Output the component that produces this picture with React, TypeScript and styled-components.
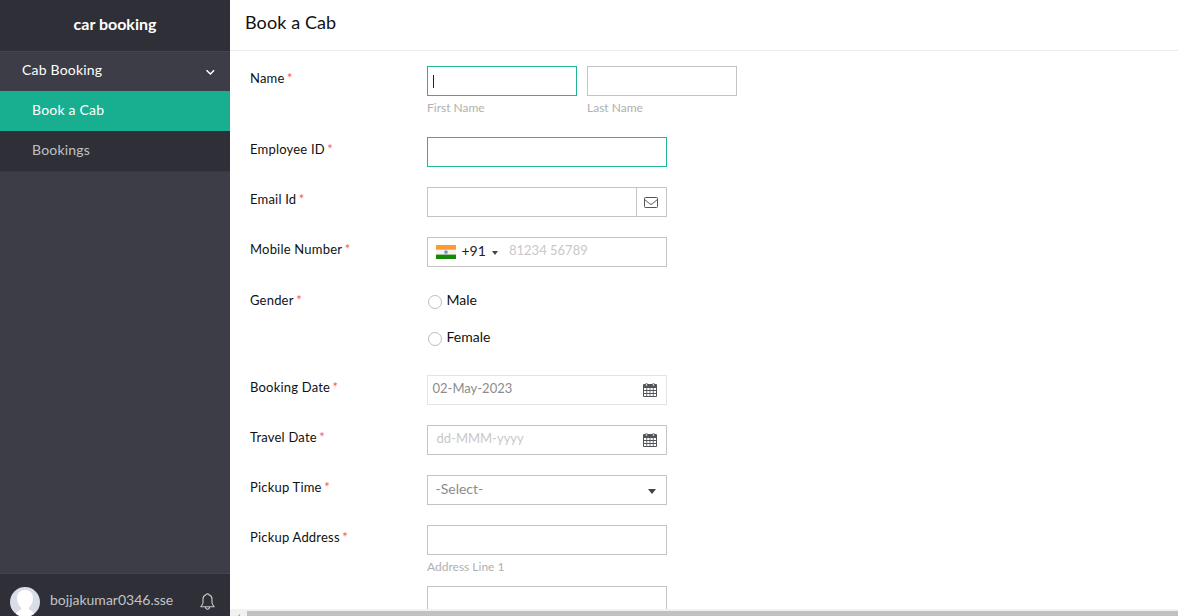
import React from "react";
import styled, { createGlobalStyle } from "styled-components";

const GlobalStyle = createGlobalStyle`
  *, *::before, *::after { box-sizing: border-box; }
  html, body { margin: 0; height: 100%; overflow: hidden; background: #fff; }
  body { font-family: Lato, "Liberation Sans", sans-serif; color: #111; }
`;

const Shell = styled.div`
  display: flex;
  width: 100vw;
  height: 100vh;
  overflow: hidden;
`;

const Sidebar = styled.aside`
  display: flex;
  flex-direction: column;
  width: 230px;
  flex: none;
  background: #3d3d47;
`;

const Brand = styled.div`
  height: 52px;
  padding-top: 14px;
  border-bottom: 1px solid #45454e;
  background: #2f2f38;
  color: #fff;
  font-size: 16px;
  font-weight: 700;
  line-height: 20px;
  text-align: center;
`;

const Section = styled.div`
  display: flex;
  align-items: center;
  justify-content: space-between;
  height: 39px;
  padding: 0 15px 3px 22px;
  color: #fff;
  font-size: 14px;
  letter-spacing: 0.2px;
  line-height: 20px;
`;

const NavItem = styled.div<{ $active?: boolean }>`
  height: 40px;
  padding: 9px 0 0 32px;
  background: ${(p) => (p.$active ? "#18af91" : "#2f2f38")};
  color: ${(p) => (p.$active ? "#fff" : "#c1c1c4")};
  font-size: 14px;
  letter-spacing: 0.2px;
  line-height: 20px;
`;

const SidebarFill = styled.div`
  flex: 1;
  border-top: 1px solid #383841;
`;

const UserBar = styled.div`
  display: flex;
  height: 43px;
  padding: 13px 15px 0 10px;
  border-top: 1px solid #45454e;
  background: #2f2f38;
  color: #c3c3c6;
  overflow: hidden;
`;

const UserName = styled.span`
  flex: 1;
  padding: 3px 0 0 10px;
  font-size: 14px;
  line-height: 20px;
`;

const Main = styled.main`
  display: flex;
  flex-direction: column;
  flex: 1;
  min-width: 0;
`;

const Title = styled.h1`
  flex: none;
  height: 51px;
  margin: 0;
  padding: 10px 0 0 15px;
  border-bottom: 1px solid #ececec;
  font-size: 18px;
  font-weight: 400;
  letter-spacing: 0.1px;
  line-height: 24px;
`;

const Form = styled.div`
  flex: 1;
  min-height: 0;
  padding: 15px 0 0 20px;
  overflow: hidden;
`;

const Row = styled.div<{ $height?: number }>`
  display: flex;
  height: ${(p) => p.$height ?? 50}px;
`;

const Label = styled.div<{ $top: number }>`
  width: 177px;
  flex: none;
  padding-top: ${(p) => p.$top}px;
  font-size: 13px;
  letter-spacing: 0.2px;
  line-height: 20px;
  white-space: nowrap;
`;

const Star = styled.span`
  margin-left: 2.5px;
  color: #f55;
  font-size: 13px;
`;

const Columns = styled.div`
  display: flex;
  gap: 10px;
`;

const Hint = styled.div`
  height: 31px;
  padding-top: 3px;
  color: #b0b0b0;
  font-size: 12px;
  line-height: 18px;
`;

const Field = styled.div<{ $width?: number; $tone?: "accent" | "light" }>`
  display: flex;
  width: ${(p) => p.$width ?? 240}px;
  height: 30px;
  border: 1px solid
    ${(p) => (p.$tone === "accent" ? "#20b698" : p.$tone === "light" ? "#e4e4e4" : "#c4c4c4")};
  background: #fff;
`;

const Caret = styled.i`
  width: 1px;
  height: 13px;
  margin: 8px 0 0 5px;
  background: #222;
`;

const Addon = styled.div`
  display: flex;
  align-items: center;
  justify-content: center;
  width: 30px;
  margin-left: auto;
  padding-right: 2px;
  border-left: 1px solid #c4c4c4;
`;

const Value = styled.span<{ $indent: number; $color: string; $size?: number; $top?: number }>`
  flex: 1;
  padding: ${(p) => p.$top ?? 2}px 0 0 ${(p) => p.$indent}px;
  color: ${(p) => p.$color};
  font-size: ${(p) => p.$size ?? 13}px;
  line-height: 20px;
`;

const CalendarSlot = styled.div`
  padding: 7px 9px 0 0;
  line-height: 0;
`;

const ArrowSlot = styled.div`
  padding: 12px 10px 0 0;
  line-height: 0;
`;

const Dial = styled.div`
  display: flex;
  padding-left: 8px;
  color: #222;
  font-size: 14px;
  line-height: 20px;
`;

const FlagSlot = styled.div`
  padding-top: 7px;
  line-height: 0;
`;

const Code = styled.span`
  padding: 3px 0 0 5.5px;
  width: 36px;
`;

const DialArrow = styled.div`
  padding-top: 12px;
  line-height: 0;
`;

const Options = styled.div`
  display: flex;
  flex-direction: column;
  gap: 17px;
  padding-top: 3px;
`;

const Option = styled.div`
  display: flex;
  height: 20px;
  padding-left: 1px;
  font-size: 14px;
  line-height: 20px;
`;

const Radio = styled.i`
  width: 14px;
  height: 14px;
  margin: 5px 4.5px 0 0;
  border: 1px solid #bdbdbd;
  border-radius: 50%;
`;

const ScrollTrack = styled.div`
  display: flex;
  height: 7px;
  flex: none;
  padding-top: 2px;
  background: #f1f1f1;
`;

const ScrollButton = styled.div`
  width: 17px;
  line-height: 0;
`;

const ScrollThumb = styled.div`
  flex: 1;
  background: #c1c1c1;
`;

const ChevronIcon = styled.svg`
  margin-top: 5px;
`;

const Chevron = () => (
  <ChevronIcon width="10" height="7" viewBox="0 0 10 7" fill="none">
    <path d="M1.500 1.300 5.400 5l3.700-3.700" stroke="#fff" strokeWidth="1.500" />
  </ChevronIcon>
);

const Avatar = () => (
  <svg width="30" height="30" viewBox="0 0 30 30">
    <defs>
      <clipPath id="avatar">
        <circle cx="15" cy="15" r="15" />
      </clipPath>
    </defs>
    <g clipPath="url(#avatar)">
      <rect width="30" height="30" fill="#d9dde8" />
      <path
        d="M15 3c-5 0-8 3.200-8 8 0 4.200 1.600 7.600 4 9.600v2c-2.500 1.400-4 2-5 4V30h18v-3.400c-1-2-2.500-2.600-5-4v-2c2.400-2 4-5.400 4-9.600 0-4.800-3-8-8-8Z"
        fill="#fff"
      />
    </g>
  </svg>
);

const BellIcon = styled.svg`
  margin-top: 6px;
`;

const Bell = () => (
  <BellIcon width="15" height="17" viewBox="0 0 15 17" fill="none" stroke="#c8c8cc" strokeWidth="1.100">
    <path d="M5.900 1.900c0-1.400 3.200-1.400 3.200 0C11.300 2.500 12 4.300 12 6.200v3.300c0 1.800.9 2.500 2 3.800v.4H1v-.4c1.100-1.300 2-2 2-3.800V6.200c0-1.900.7-3.700 2.900-4.300" />
    <path d="M5.500 14c.2 2.900 3.800 2.900 4 0" />
  </BellIcon>
);

const Envelope = () => (
  <svg width="14" height="11" viewBox="0 0 14 11" fill="none" stroke="#555" strokeWidth="1">
    <rect x=".5" y=".5" width="13" height="10" rx=".8" />
    <path d="m1 2.800 4.700 4q1.300 1 2.600 0l4.700-4" />
  </svg>
);

const Flag = () => (
  <svg width="20" height="14" viewBox="0 0 20 14">
    <rect width="20" height="14" fill="#f3f3f3" />
    <rect width="20" height="4.700" fill="#ff9933" />
    <rect y="9.600" width="20" height="4.400" fill="#128807" />
    <circle cx="10" cy="7.100" r="1.900" fill="#9292cf" />
    <circle cx="10" cy="7.100" r=".8" fill="#7b7bc5" />
  </svg>
);

const Calendar = () => (
  <svg width="14" height="14" viewBox="0 0 14 14">
    <path d="M1 1h12q1 0 1 1v11q0 1-1 1H1q-1 0-1-1V2q0-1 1-1Z" fill="#505358" />
    <g fill="#fff">
      {[5, 8, 11].map((y) =>
        [1, 4.200, 7.400, 10.600].map((x) => <rect key={`${x}-${y}`} x={x} y={y} width="2.400" height="2" />)
      )}
    </g>
    <rect x="2.500" y=".4" width="2" height="2.900" rx="1" fill="#ccd4da" stroke="#505358" strokeWidth=".7" />
    <rect x="9.500" y=".4" width="2" height="2.900" rx="1" fill="#ccd4da" stroke="#505358" strokeWidth=".7" />
  </svg>
);

const Arrow = ({ width, height }: { width: number; height: number }) => (
  <svg width={width} height={height} viewBox="0 0 8 5" preserveAspectRatio="none">
    <path d="M0 0h8L4 5Z" fill="#444" />
  </svg>
);

const Required = ({ children, top = 2 }: { children: string; top?: number }) => (
  <Label $top={top}>
    {children}
    <Star>*</Star>
  </Label>
);

export default function App() {
  return (
    <>
      <GlobalStyle />
      <Shell>
        <Sidebar>
          <Brand>car booking</Brand>
          <Section>
            Cab Booking
            <Chevron />
          </Section>
          <NavItem $active>Book a Cab</NavItem>
          <NavItem>Bookings</NavItem>
          <SidebarFill />
          <UserBar>
            <Avatar />
            <UserName>bojjakumar0346.sse</UserName>
            <Bell />
          </UserBar>
        </Sidebar>
        <Main>
          <Title>Book a Cab</Title>
          <Form>
            <Row $height={71}>
              <Required>Name</Required>
              <Columns>
                <div>
                  <Field $width={150} $tone="accent">
                    <Caret />
                  </Field>
                  <Hint>First Name</Hint>
                </div>
                <div>
                  <Field $width={150} />
                  <Hint>Last Name</Hint>
                </div>
              </Columns>
            </Row>
            <Row>
              <Required>Employee ID</Required>
              <Field $tone="accent" />
            </Row>
            <Row>
              <Required>Email Id</Required>
              <Field>
                <Addon>
                  <Envelope />
                </Addon>
              </Field>
            </Row>
            <Row>
              <Required>Mobile Number</Required>
              <Field>
                <Dial>
                  <FlagSlot>
                    <Flag />
                  </FlagSlot>
                  <Code>+91</Code>
                  <DialArrow>
                    <Arrow width={6} height={4} />
                  </DialArrow>
                </Dial>
                <Value $indent={11} $color="#c8c8c8">81234 56789</Value>
              </Field>
            </Row>
            <Row $height={88}>
              <Required top={3}>Gender</Required>
              <Options>
                <Option>
                  <Radio />
                  Male
                </Option>
                <Option>
                  <Radio />
                  Female
                </Option>
              </Options>
            </Row>
            <Row>
              <Required>Booking Date</Required>
              <Field $tone="light">
                <Value $indent={4.5} $color="#8c8c8c">02-May-2023</Value>
                <CalendarSlot>
                  <Calendar />
                </CalendarSlot>
              </Field>
            </Row>
            <Row>
              <Required>Travel Date</Required>
              <Field>
                <Value $indent={8.5} $color="#c8c8c8">dd-MMM-yyyy</Value>
                <CalendarSlot>
                  <Calendar />
                </CalendarSlot>
              </Field>
            </Row>
            <Row>
              <Required>Pickup Time</Required>
              <Field>
                <Value $indent={7.5} $color="#8c8c8c" $size={14} $top={3}>-Select-</Value>
                <ArrowSlot>
                  <Arrow width={8} height={5} />
                </ArrowSlot>
              </Field>
            </Row>
            <Row $height={91}>
              <Required>Pickup Address</Required>
              <div>
                <Field />
                <Hint>Address Line 1</Hint>
                <Field />
              </div>
            </Row>
          </Form>
          <ScrollTrack>
            <ScrollButton>
              <svg width="17" height="5" viewBox="0 0 17 5">
                <path d="M7 5 10 2v3Z" fill="#a3a3a3" />
              </svg>
            </ScrollButton>
            <ScrollThumb />
          </ScrollTrack>
        </Main>
      </Shell>
    </>
  );
}
